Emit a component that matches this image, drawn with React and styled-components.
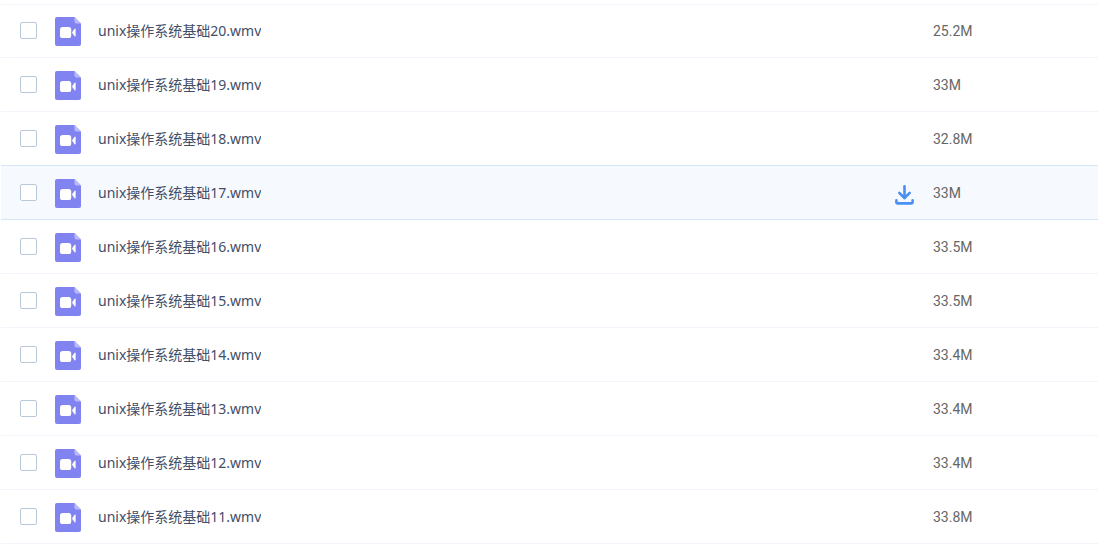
import React from "react";
import styled, { createGlobalStyle } from "styled-components";

const GlobalStyle = createGlobalStyle`
  * { box-sizing: border-box; }
  body {
    margin: 0;
    background: #fff;
    font-family: "Noto Sans", "Noto Sans CJK SC", sans-serif;
    font-size: 14px;
    line-height: 20px;
  }
`;

const FileList = styled.ul`
  list-style: none;
  margin: 0;
  padding: 5px 0 10px 1px;
`;

const FileRow = styled.li`
  position: relative;
  z-index: ${(p) => (p.$active ? 1 : 0)};
  display: flex;
  align-items: center;
  height: 55px;
  margin-top: -1px;
  padding-left: 19px;
  border: solid ${(p) => (p.$active ? "#d5e6fb" : "#f2f4fb")};
  border-width: 1px 0;
  background: ${(p) => (p.$active ? "#f6faff" : "#fff")};

  &:first-child {
    height: 54px;
    padding-bottom: 1px;
  }
`;

const Checkbox = styled.input`
  appearance: none;
  flex: none;
  width: 17px;
  height: 17px;
  margin: 0 18px 0 0;
  border: 1px solid #b9c8d8;
  border-radius: 2px;
  background: #fff;

  &:checked {
    background: #4a90f2;
  }
`;

const FileLabel = styled.label`
  display: flex;
  align-items: center;
  flex: 1;
  min-width: 0;
  gap: 17px;
  color: #424e67;
`;

const FileIcon = styled.svg`
  flex: none;
  width: 26px;
  height: 31px;
  padding-top: 2px;
`;

const FileName = styled.span`
  overflow: hidden;
  text-overflow: ellipsis;
  white-space: nowrap;
`;

const DownloadButton = styled.button`
  display: flex;
  flex: none;
  margin: 0 19px 0 0;
  padding: 4px 0 0;
  border: 0;
  background: none;
  color: #4a90f2;
  cursor: pointer;
`;

const FileSize = styled.span`
  flex: none;
  width: 165px;
  color: #666;
  font-family: Roboto, "Noto Sans", sans-serif;
`;

function VideoFileIcon() {
  return (
    <FileIcon viewBox="0 0 26 29" aria-hidden="true">
      <path d="M2 0H19.5L26 6.5V27Q26 29 24 29H2Q0 29 0 27V2Q0 0 2 0Z" fill="#8183f1" />
      <path d="M19.5 0L26 6.5H21.5Q19.5 6.5 19.5 4.5Z" fill="#b9bafa" />
      <rect x="5" y="10" width="11.2" height="11" rx="2.6" fill="#fff" />
      <path d="M17 15.5L19.4 12Q20.6 10.8 20.6 12.2V18.8Q20.6 20.2 19.4 19Z" fill="#fff" />
    </FileIcon>
  );
}

function DownloadIcon() {
  return (
    <svg width="19" height="20" viewBox="0 0 19 20" fill="none" stroke="currentColor" strokeLinecap="round" strokeLinejoin="round" aria-hidden="true">
      <path d="M9.5 1.3V13" strokeWidth="2.6" />
      <path d="M4.3 7.8L9.5 13L14.7 7.8" strokeWidth="2.6" />
      <path d="M1.4 15.4V17Q1.4 18.4 2.8 18.4H16.2Q17.6 18.4 17.6 17V15.4" strokeWidth="2.6" />
    </svg>
  );
}

const files = [
  { no: 20, size: "25.2M" },
  { no: 19, size: "33M" },
  { no: 18, size: "32.8M" },
  { no: 17, size: "33M", active: true },
  { no: 16, size: "33.5M" },
  { no: 15, size: "33.5M" },
  { no: 14, size: "33.4M" },
  { no: 13, size: "33.4M" },
  { no: 12, size: "33.4M" },
  { no: 11, size: "33.8M" },
];

export default function App() {
  return (
    <>
      <GlobalStyle />
      <FileList>
        {files.map(({ no, size, active }) => (
          <FileRow key={no} $active={active}>
            <Checkbox type="checkbox" id={`file-${no}`} />
            <FileLabel htmlFor={`file-${no}`}>
              <VideoFileIcon />
              <FileName>{`unix操作系统基础${no}.wmv`}</FileName>
            </FileLabel>
            {active && (
              <DownloadButton type="button" aria-label="下载">
                <DownloadIcon />
              </DownloadButton>
            )}
            <FileSize>{size}</FileSize>
          </FileRow>
        ))}
      </FileList>
    </>
  );
}
